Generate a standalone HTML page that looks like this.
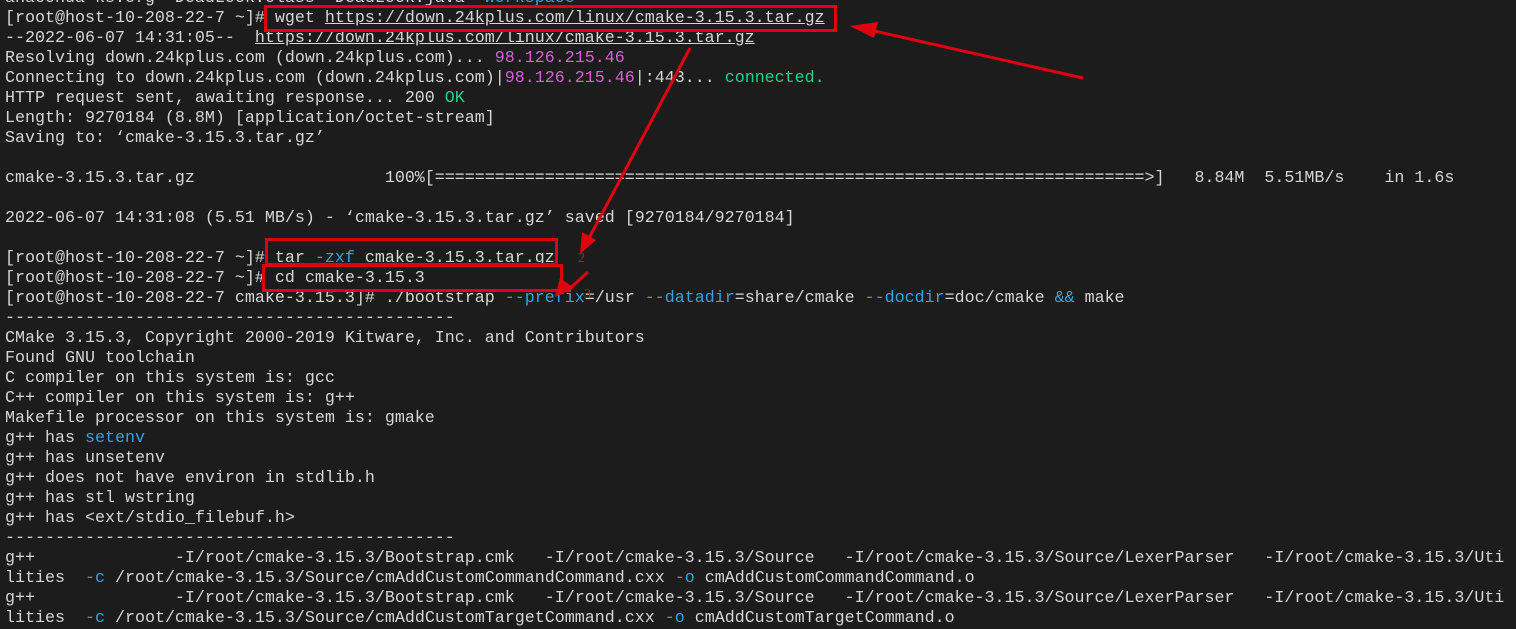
<!DOCTYPE html>
<html><head><meta charset="utf-8"><style>
html,body{margin:0;padding:0;background:#1c1c1c;width:1516px;height:628px;overflow:hidden}
pre{position:absolute;left:5px;top:-11px;margin:0;font-family:"Liberation Mono",monospace;font-size:16.67px;line-height:20px;color:#d6d6d6;white-space:pre}
.b{color:#3aa0dd}.p{color:#d660d6}.g{color:#23d18b}.u{text-decoration:underline}
svg{position:absolute;left:0;top:0}
</style></head><body>
<pre>anaconda-ks.cfg  DeadLock.class  DeadLock.java  <span class="b">workspace</span>
[root@host-10-208-22-7 ~]# wget <span class="u">https://down.24kplus.com/linux/cmake-3.15.3.tar.gz</span>
--2022-06-07 14:31:05--  <span class="u">https://down.24kplus.com/linux/cmake-3.15.3.tar.gz</span>
Resolving down.24kplus.com (down.24kplus.com)... <span class="p">98.126.215.46</span>
Connecting to down.24kplus.com (down.24kplus.com)|<span class="p">98.126.215.46</span>|:443... <span class="g">connected.</span>
HTTP request sent, awaiting response... 200 <span class="g">OK</span>
Length: 9270184 (8.8M) [application/octet-stream]
Saving to: ‘cmake-3.15.3.tar.gz’

cmake-3.15.3.tar.gz                   100%[=======================================================================>]   8.84M  5.51MB/s    in 1.6s

2022-06-07 14:31:08 (5.51 MB/s) - ‘cmake-3.15.3.tar.gz’ saved [9270184/9270184]

[root@host-10-208-22-7 ~]# tar <span class="b">-zxf</span> cmake-3.15.3.tar.gz
[root@host-10-208-22-7 ~]# cd cmake-3.15.3
[root@host-10-208-22-7 cmake-3.15.3]# ./bootstrap <span class="b">--prefix</span>=/usr <span class="b">--datadir</span>=share/cmake <span class="b">--docdir</span>=doc/cmake <span class="b">&amp;&amp;</span> make
---------------------------------------------
CMake 3.15.3, Copyright 2000-2019 Kitware, Inc. and Contributors
Found GNU toolchain
C compiler on this system is: gcc
C++ compiler on this system is: g++
Makefile processor on this system is: gmake
g++ has <span class="b">setenv</span>
g++ has unsetenv
g++ does not have environ in stdlib.h
g++ has stl wstring
g++ has &lt;ext/stdio_filebuf.h&gt;
---------------------------------------------
g++              -I/root/cmake-3.15.3/Bootstrap.cmk   -I/root/cmake-3.15.3/Source   -I/root/cmake-3.15.3/Source/LexerParser   -I/root/cmake-3.15.3/Uti
lities  <span class="b">-c</span> /root/cmake-3.15.3/Source/cmAddCustomCommandCommand.cxx <span class="b">-o</span> cmAddCustomCommandCommand.o
g++              -I/root/cmake-3.15.3/Bootstrap.cmk   -I/root/cmake-3.15.3/Source   -I/root/cmake-3.15.3/Source/LexerParser   -I/root/cmake-3.15.3/Uti
lities  <span class="b">-c</span> /root/cmake-3.15.3/Source/cmAddCustomTargetCommand.cxx <span class="b">-o</span> cmAddCustomTargetCommand.o</pre>
<svg width="1516" height="628">
<g fill="none" stroke="#e00010" stroke-width="3">
<rect x="265.5" y="6.5" width="570" height="24"/>
<rect x="266.5" y="239.5" width="290" height="25"/>
<rect x="263.5" y="265.5" width="298" height="25"/>
<line x1="1083" y1="78" x2="870" y2="30"/>
<line x1="690" y1="48" x2="588" y2="240"/>
<line x1="588" y1="272" x2="566" y2="292"/>
</g>
<g fill="#e00010">
<polygon points="850,26 878,22 874,38"/>
<polygon points="580,254 582,232 596,240"/>
<polygon points="555,297 560,278 574,288"/>
</g>
<text x="578" y="262" fill="#e00010" font-family="Liberation Serif,serif" font-size="14">2</text>
<text x="584" y="298" fill="#e00010" font-family="Liberation Serif,serif" font-size="14">3</text>
</svg>
</body></html>
